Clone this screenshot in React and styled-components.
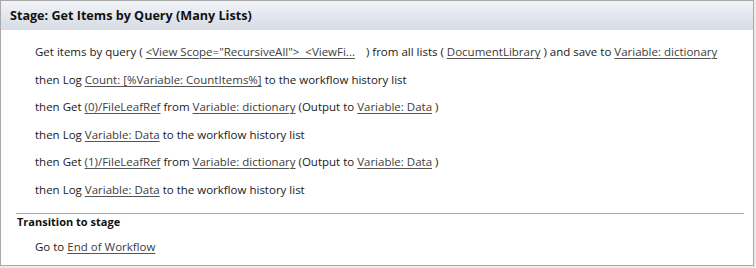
import styled, { createGlobalStyle } from 'styled-components';

const GlobalStyle = createGlobalStyle`
    html, body {
        margin: 0;
        padding: 0;
        background: #ebebeb;
    }
    body {
        font-family: "Open Sans", "Noto Sans", sans-serif;
    }
`;

const StageBox = styled.div`
    box-sizing: border-box;
    width: 754px;
    height: 266px;
    border: 1px solid #a9a9a9;
    background: #ffffff;
    display: flex;
    flex-direction: column;
`;

const StageHeader = styled.div`
    height: 29px;
    display: flex;
    align-items: center;
    padding: 0 9px;
    background: linear-gradient(to bottom, #f2f4f7 0%, #e3e7ee 50%, #d6dbe4 100%);
    font-size: 12.6px;
    font-weight: 700;
    color: #111;
`;

const StageBody = styled.div`
    padding: 8px 9px 0 15px;
    display: flex;
    flex-direction: column;
`;

const Line = styled.div`
    height: 27.5px;
    display: flex;
    align-items: center;
    padding-left: 19px;
    font-size: 11.5px;
    color: #1a1a1a;
    white-space: pre;
`;

const Link = styled.span`
    color: #3c3c3c;
    text-decoration: underline;
    text-underline-offset: 2px;
    text-decoration-color: #555;
`;

const Gap = styled.span`
    display: inline-block;
    width: ${props => props.w}px;
`;

const Transition = styled.div`
    margin-top: 10px;
    border-top: 1px solid #a9a9a9;
`;

const TransitionTitle = styled.div`
    height: 14px;
    display: flex;
    align-items: center;
    padding-left: 1px;
    font-size: 11px;
    font-weight: 700;
    color: #111;
`;

const TransitionBody = styled.div`
    margin-top: 5px;
`;

const App = () => {
    return (
        <>
            <GlobalStyle />
            <StageBox>
                <StageHeader>Stage: Get Items by Query (Many Lists)</StageHeader>
                <StageBody>
                    <Line>
                        Get items by query ( <Link>{'<View Scope="RecursiveAll">  <ViewFi...'}</Link><Gap w={8} /> ) from all lists ( <Link>DocumentLibrary</Link> ) and save to <Link>Variable: dictionary</Link>
                    </Line>
                    <Line>
                        then Log <Link>Count: [%Variable: CountItems%]</Link> to the workflow history list
                    </Line>
                    <Line>
                        then Get <Link>(0)/FileLeafRef</Link> from <Link>Variable: dictionary</Link> (Output to <Link>Variable: Data</Link> )
                    </Line>
                    <Line>
                        then Log <Link>Variable: Data</Link> to the workflow history list
                    </Line>
                    <Line>
                        then Get <Link>(1)/FileLeafRef</Link> from <Link>Variable: dictionary</Link> (Output to <Link>Variable: Data</Link> )
                    </Line>
                    <Line>
                        then Log <Link>Variable: Data</Link> to the workflow history list
                    </Line>
                    <Transition>
                        <TransitionTitle>Transition to stage</TransitionTitle>
                        <TransitionBody>
                            <Line>
                                Go to <Link>End of Workflow</Link>
                            </Line>
                        </TransitionBody>
                    </Transition>
                </StageBody>
            </StageBox>
        </>
    );
};

export default App;
